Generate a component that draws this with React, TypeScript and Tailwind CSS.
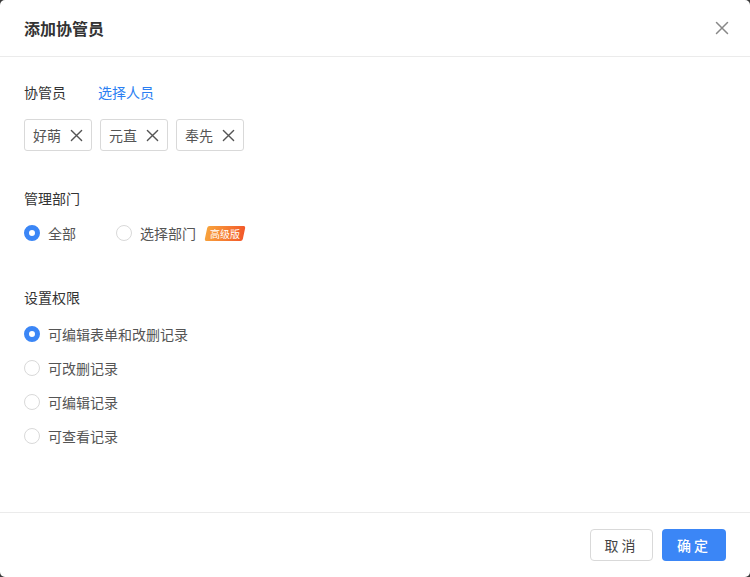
import React from "react";

const font = { fontFamily: '"Noto Sans CJK SC", "Noto Sans", sans-serif' };

function XIcon({ size = 14, color = "#555" }: { size?: number; color?: string }) {
  return (
    <svg width={size} height={size} viewBox="0 0 14 14" fill="none">
      <path d="M1.5 1.5L12.5 12.5M12.5 1.5L1.5 12.5" stroke={color} strokeWidth="1.5" strokeLinecap="round" />
    </svg>
  );
}

function Radio({ checked }: { checked?: boolean }) {
  return checked ? (
    <span className="box-border inline-block h-4 w-4 shrink-0 rounded-full border-[5px] border-[#3b86f6] bg-white" />
  ) : (
    <span className="box-border inline-block h-4 w-4 shrink-0 rounded-full border border-[#d9d9d9] bg-white" />
  );
}

function Tag({ label }: { label: string }) {
  return (
    <div className="flex h-8 w-[68px] items-center justify-between rounded-[3px] border border-[#d9d9d9] pl-[8px] pr-[8px] text-[14px] text-[#555]">
      <span>{label}</span>
      <XIcon size={13} color="#555" />
    </div>
  );
}

export default function App() {
  return (
    <div className="h-[577px] w-[750px] bg-[#3a3a3a]" style={font}>
      <div className="flex h-full w-full flex-col overflow-hidden rounded-[5px] bg-white">
        <div className="flex h-[57px] shrink-0 items-center justify-between border-b border-[#ebebeb] pl-6 pr-[21px]">
          <div className="text-[16px] font-semibold text-[#333]">添加协管员</div>
          <XIcon size={14} color="#888" />
        </div>
        <div className="flex-1 px-6">
          <div className="mt-[25px] flex items-center text-[14px] leading-[20px]">
            <span className="w-[74px] text-[#333]">协管员</span>
            <span className="text-[#2b7ff2]">选择人员</span>
          </div>
          <div className="mt-[17px] flex gap-[8px]">
            <Tag label="好萌" />
            <Tag label="元直" />
            <Tag label="奉先" />
          </div>
          <div className="mt-[37px] text-[14px] leading-[20px] text-[#333]">管理部门</div>
          <div className="mt-[15px] flex items-center text-[14px] leading-[20px] text-[#555]">
            <Radio checked />
            <span className="ml-2 w-[68px]">全部</span>
            <Radio />
            <span className="ml-2">选择部门</span>
            <span className="ml-[10px] flex h-[15px] -skew-x-12 items-center rounded-[2px] bg-gradient-to-r from-[#f7a23c] to-[#f2582a] px-[4px]">
              <span className="skew-x-12 text-[10px] leading-none text-white">高级版</span>
            </span>
          </div>
          <div className="mt-[44px] text-[14px] leading-[20px] text-[#333]">设置权限</div>
          <div className="mt-[17px] flex flex-col gap-[14px] text-[14px] leading-[20px] text-[#555]">
            <div className="flex items-center">
              <Radio checked />
              <span className="ml-2">可编辑表单和改删记录</span>
            </div>
            <div className="flex items-center">
              <Radio />
              <span className="ml-2">可改删记录</span>
            </div>
            <div className="flex items-center">
              <Radio />
              <span className="ml-2">可编辑记录</span>
            </div>
            <div className="flex items-center">
              <Radio />
              <span className="ml-2">可查看记录</span>
            </div>
          </div>
        </div>
        <div className="flex h-[65px] shrink-0 items-center justify-end gap-[9px] border-t border-[#ebebeb] pr-6">
          <button className="h-8 w-[63px] rounded-[4px] border border-[#d9d9d9] bg-white text-[14px] tracking-[3px] text-[#444]">
            取消
          </button>
          <button className="h-8 w-[64px] rounded-[4px] bg-[#3b86f6] text-[14px] font-medium tracking-[3px] text-white">
            确定
          </button>
        </div>
      </div>
    </div>
  );
}
